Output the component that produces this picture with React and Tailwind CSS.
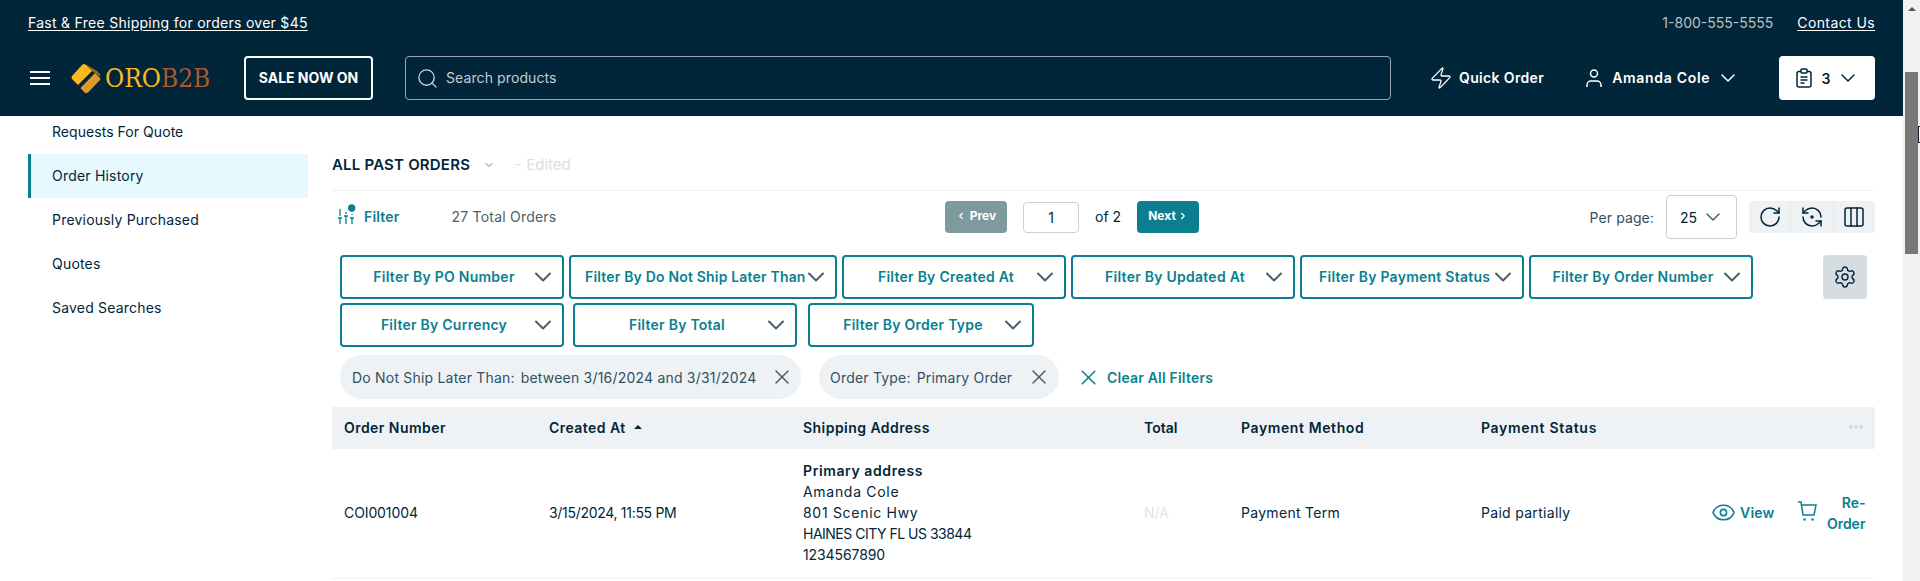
import React from 'react';
import { Search, Zap, ChevronDown, X, RotateCw, RefreshCcwDot, Columns3, Settings, Eye, ChevronLeft, ChevronRight } from 'lucide-react';

const navItems = ['Order History', 'Previously Purchased', 'Quotes', 'Saved Searches'];

const FilterButton = ({ label, width = 'w-[224px]', pad = 'pl-[17px]', track = 'tracking-[0.25px]' }) => (
  <button className={`${width} ${pad} h-[44px] flex items-center pr-[5px] border-2 border-[#0b7f8f] rounded-[4px] bg-white`}>
    <span className={`${track} flex-1 min-w-0 pb-[2px] text-center text-[14px] font-semibold text-[#0b7f8f] whitespace-nowrap`}>{label}</span>
    <ChevronDown className="w-[28px] h-[28px] text-[#4a5f6b] shrink-0" strokeWidth={1.7} />
  </button>
);

const Logo = () => (
  <div className="flex items-center">
    <svg className="w-[30px] h-[31px] shrink-0" viewBox="0 0 30 31">
      <path d="M14 1L26 8Q29 10 29.500 14L24 10L21 8Z" fill="#9a6a1f" />
      <path d="M1 13L11 2Q13 0 15 2L21 8L7 22L1 16Q0 14.500 1 13Z" fill="#fdb81e" />
      <path d="M24 10L29 15Q30 16 29 17L17 29.500Q15 31 13.500 29.500L9.500 25Z" fill="#e0992a" />
    </svg>
    <span className="ml-[4px] text-[26px] leading-none font-['DejaVu_Serif',serif] [font-stretch:condensed] text-[#fdb81e]">
      ORO<span className="text-[#b5552b]">B2B</span>
    </span>
  </div>
);

export default function App() {
  return (
    <div className="relative flex w-[1920px] h-[581px] overflow-hidden bg-white text-[14px] text-[#012639] font-['Inter',sans-serif]">
      <div className="w-[1903px] flex flex-col">
        <header className="bg-[#012639] text-white pl-[28px] pr-[28px] h-[116px] shrink-0">
          <div className="h-[44px] flex items-center justify-between">
            <a className="underline underline-offset-2 tracking-[0.28px]">Fast &amp; Free Shipping for orders over $45</a>
            <div className="flex items-center gap-[24px]">
              <span className="text-[#b8c2c8]">1-800-555-5555</span>
              <a className="underline underline-offset-2 tracking-[0.4px]">Contact Us</a>
            </div>
          </div>
          <div className="flex items-center h-[44px] mt-[12px]">
            <div className="w-[20px] flex flex-col gap-[4px] ml-[2px]">
              <span className="h-[2px] bg-white" />
              <span className="h-[2px] bg-white" />
              <span className="h-[2px] bg-white" />
            </div>
            <div className="ml-[21px] w-[173px]">
              <Logo />
            </div>
            <button className="w-[129px] h-[44px] pb-[2px] border-2 border-white rounded-[4px] font-bold text-[14px]">SALE NOW ON</button>
            <div className="ml-[32px] w-[986px] h-[44px] flex items-center border border-[#9aa8b0] rounded-[4px] pl-[10px]">
              <Search className="w-[23px] h-[23px] text-[#c5ced3]" strokeWidth={1.4} />
              <span className="ml-[7px] pb-[2px] text-[#c5ced3] tracking-[0.1px]">Search products</span>
            </div>
            <div className="ml-[38px] flex items-center">
              <Zap className="w-[24px] h-[24px]" strokeWidth={1.3} />
              <span className="ml-[6px] pb-[2px] font-semibold tracking-[0.35px]">Quick Order</span>
            </div>
            <div className="ml-[40px] flex items-center">
              <svg className="w-[20px] h-[20px]" viewBox="0 0 20 20" fill="none" stroke="currentColor" strokeWidth="1.5">
                <circle cx="10" cy="5.500" r="3.500" />
                <path d="M3 19v-2a4 4 0 0 1 4-4h6a4 4 0 0 1 4 4v2" />
              </svg>
              <span className="ml-[8px] pb-[2px] font-semibold tracking-[0.7px]">Amanda Cole</span>
              <ChevronDown className="ml-[6px] w-[24px] h-[24px]" strokeWidth={1.5} />
            </div>
            <button className="ml-auto w-[96px] h-[44px] bg-white rounded-[4px] flex items-center justify-center text-[#012639] font-semibold">
              <svg className="w-[20px] h-[20px]" viewBox="0 0 20 20" fill="none" stroke="currentColor" strokeWidth="1.5">
                <rect x="3" y="3.500" width="14" height="15.500" rx="2" />
                <rect x="7" y="1" width="6" height="4" rx="1" fill="white" />
                <path d="M6.500 9h7M6.500 12h7M6.500 15h4" />
              </svg>
              <span className="ml-[8px]">3</span>
              <ChevronDown className="ml-[6px] w-[24px] h-[24px]" strokeWidth={1.5} />
            </button>
          </div>
        </header>

        <div className="flex flex-1 min-h-0 pl-[28px] pr-[28px]">
          <aside className="w-[280px] shrink-0">
            <div className="h-[38px] pb-[8px] pl-[24px] flex items-center tracking-[0.05px]">Requests For Quote</div>
            {navItems.map((item, i) => (
              <div
                key={item}
                className={i === 0 ? 'h-[44px] pb-[2px] pl-[21px] flex items-center bg-[#e6f9fe] border-l-[3px] border-[#0b7f8f] tracking-[0.2px]' : 'h-[44px] pb-[2px] pl-[24px] flex items-center tracking-[0.2px]'}
              >
                {item}
              </div>
            ))}
          </aside>

          <main className="ml-[24px] flex-1 min-w-0">
            <div className="h-[75px] pt-[24px] flex items-center border-b border-[#eef0f2]">
              <span className="font-semibold text-[15px] tracking-[0.2px]">ALL PAST ORDERS</span>
              <ChevronDown className="ml-[13px] w-[12px] h-[12px] text-[#6b7c86]" />
              <span className="ml-[20px] text-[#d9dfe2] text-[15px]">- Edited</span>
            </div>

            <div className="h-[52px] mb-[12px] grid grid-cols-[613px_254px_1fr] items-center">
              <div className="flex items-center pl-[6px]">
                <svg className="w-[18px] h-[22px] -mt-[4px] text-[#0b7f8f]" viewBox="0 0 18 22" fill="none" stroke="currentColor" strokeWidth="1.300">
                  <path d="M2 5v7M0 14h4M2 14v6M8 8v2M6 12h4M8 12v8M14 10v1M12 14h4M14 14v6" />
                  <circle cx="13.700" cy="4" r="3.700" fill="currentColor" stroke="none" />
                </svg>
                <span className="ml-[8px] pb-[2px] font-semibold text-[#0b7f8f] tracking-[0.2px]">Filter</span>
                <span className="ml-[52px] pb-[2px] text-[#4a5f6b] tracking-[0.2px]">27 Total Orders</span>
              </div>
              <div className="flex items-center">
                <button className="w-[62px] h-[32px] pb-[2px] rounded-[4px] bg-[#7f9a9e] text-white text-[12px] font-bold flex items-center justify-center gap-[4px]">
                  <ChevronLeft className="w-[10px] h-[10px]" strokeWidth={3} />Prev
                </button>
                <div className="ml-[16px] w-[56px] h-[31px] border border-[#c8d2d6] rounded-[4px] flex items-center justify-center">1</div>
                <span className="ml-[16px] w-[42px] pb-[1px]">of 2</span>
                <button className="w-[62px] h-[32px] pb-[2px] rounded-[4px] bg-[#0b7f8f] text-white text-[12px] font-bold flex items-center justify-center gap-[2px]">
                  Next<ChevronRight className="w-[10px] h-[10px]" strokeWidth={3} />
                </button>
              </div>
              <div className="flex items-center justify-end">
                <span className="text-[#33505f] tracking-[0.1px]">Per page:</span>
                <div className="ml-[12px] w-[71px] h-[44px] border border-[#c8d2d6] rounded-[4px] flex items-center pl-[13px]">
                  25
                  <ChevronDown className="ml-[4px] w-[24px] h-[24px] text-[#4a5f6b]" strokeWidth={1.5} />
                </div>
                <div className="ml-[12px] w-[126px] h-[32px] bg-[#eef2f5] rounded-[4px] flex text-[#012639]">
                  <div className="flex-1 flex items-center justify-center border-r border-[#e6eaed]"><RotateCw className="w-[24px] h-[24px]" strokeWidth={1.5} /></div>
                  <div className="flex-1 flex items-center justify-center border-r border-[#e6eaed]"><RefreshCcwDot className="w-[24px] h-[24px]" strokeWidth={1.5} /></div>
                  <div className="flex-1 flex items-center justify-center"><Columns3 className="w-[24px] h-[24px]" strokeWidth={1.5} /></div>
                </div>
              </div>
            </div>

            <div className="pl-[8px]">
              <div className="flex items-start gap-[5px]">
                <FilterButton label="Filter By PO Number" />
                <FilterButton label="Filter By Do Not Ship Later Than" width="w-[268px]" pad="pl-[14px]" track="tracking-[0.18px]" />
                <FilterButton label="Filter By Created At" />
                <FilterButton label="Filter By Updated At" />
                <FilterButton label="Filter By Payment Status" />
                <FilterButton label="Filter By Order Number" />
                <button className="ml-[65px] w-[44px] h-[44px] bg-[#d5dde0] rounded-[4px] flex items-center justify-center">
                  <Settings className="w-[24px] h-[24px]" strokeWidth={1.4} />
                </button>
              </div>
              <div className="flex mt-[4px]">
                <FilterButton label="Filter By Currency" />
                <div className="ml-[9px]"><FilterButton label="Filter By Total" /></div>
                <div className="ml-[11px]"><FilterButton label="Filter By Order Type" width="w-[226px]" /></div>
              </div>
              <div className="flex items-center mt-[8px] tracking-[0.2px]">
                <div className="w-[461px] h-[44px] rounded-[22px] bg-[#eef2f5] flex items-center pl-[12px] text-[#33505f]">
                  <span>Do Not Ship Later Than:</span>
                  <span className="ml-[6px]">between 3/16/2024 and 3/31/2024</span>
                  <X className="ml-auto mr-[7px] w-[24px] h-[24px] text-[#4a5f6b]" strokeWidth={1.5} />
                </div>
                <div className="ml-[18px] w-[240px] h-[44px] rounded-[22px] bg-[#eef2f5] flex items-center pl-[11px] text-[#33505f]">
                  <span>Order Type:</span>
                  <span className="ml-[6px]">Primary Order</span>
                  <X className="ml-auto mr-[8px] w-[24px] h-[24px] text-[#4a5f6b]" strokeWidth={1.5} />
                </div>
                <X className="ml-[17px] w-[25px] h-[25px] text-[#0b7f8f]" strokeWidth={1.5} />
                <span className="ml-[6px] font-semibold text-[#0b7f8f]">Clear All Filters</span>
              </div>
            </div>

            <div className="mt-[8px] h-[42px] pb-[2px] bg-[#eef2f5] px-[12px] grid grid-cols-[205px_254px_341px_97px_240px_1fr_20px] items-center font-semibold tracking-[0.45px]">
              <div>Order Number</div>
              <div className="flex items-center gap-[8px]">
                Created At
                <span className="w-0 h-0 border-x-[4px] border-x-transparent border-b-[4px] border-b-[#012639]" />
              </div>
              <div>Shipping Address</div>
              <div className="tracking-normal">Total</div>
              <div className="tracking-[0.6px]">Payment Method</div>
              <div className="tracking-[0.7px]">Payment Status</div>
              <div className="flex gap-[1px] justify-end">
                <span className="w-[4px] h-[4px] rounded-full bg-[#d5dde0]" />
                <span className="w-[4px] h-[4px] rounded-full bg-[#d5dde0]" />
                <span className="w-[4px] h-[4px] rounded-full bg-[#d5dde0]" />
              </div>
            </div>
            <div className="h-[130px] pb-[2px] border-b border-[#eef0f2] px-[12px] grid grid-cols-[205px_254px_341px_97px_240px_231px_1fr] items-center">
              <div className="tracking-[-0.1px]">COI001004</div>
              <div className="tracking-[-0.3px]">3/15/2024, 11:55 PM</div>
              <div className="leading-[21px]">
                <div className="font-semibold tracking-[0.6px]">Primary address</div>
                <div className="tracking-[0.7px]">Amanda Cole</div>
                <div className="tracking-[0.7px]">801 Scenic Hwy</div>
                <div className="tracking-[-0.5px]">HAINES CITY FL US 33844</div>
                <div className="tracking-[-0.1px]">1234567890</div>
              </div>
              <div className="text-[#dfe4e7]">N/A</div>
              <div className="tracking-[0.3px]">Payment Term</div>
              <div className="tracking-[0.3px]">Paid partially</div>
              <div className="flex items-center font-semibold text-[#0b7f8f] -ml-[1px]">
                <Eye className="w-[25px] h-[25px]" strokeWidth={1.5} />
                <span className="ml-[4px] tracking-[0.2px]">View</span>
                <svg className="ml-[23px] w-[20px] h-[20px] -mt-[4px]" viewBox="0 0 20 20" fill="none" stroke="currentColor" strokeWidth="1.500">
                  <path d="M1 1h3l2 13h11l2-10H5" />
                  <circle cx="7.500" cy="18.500" r="1.200" fill="currentColor" stroke="none" />
                  <circle cx="15.500" cy="18.500" r="1.200" fill="currentColor" stroke="none" />
                </svg>
                <span className="ml-[7px] w-[41px] text-right leading-[21px]">Re-<br />Order</span>
              </div>
            </div>
          </main>
        </div>
      </div>

      <div className="w-[17px] shrink-0 bg-[#f1f1f1]">
        <div className="h-[17px] flex items-center justify-center">
          <span className="w-0 h-0 border-x-[4px] border-x-transparent border-b-[4px] border-b-[#505050]" />
        </div>
        <div className="mt-[55px] ml-[2px] w-[13px] h-[182px] bg-[#787878]" />
      </div>
      <div className="absolute right-0 top-[126px] w-[2px] h-[17px] border-l border-y border-[#1a1a2e] bg-white" />
    </div>
  );
}
